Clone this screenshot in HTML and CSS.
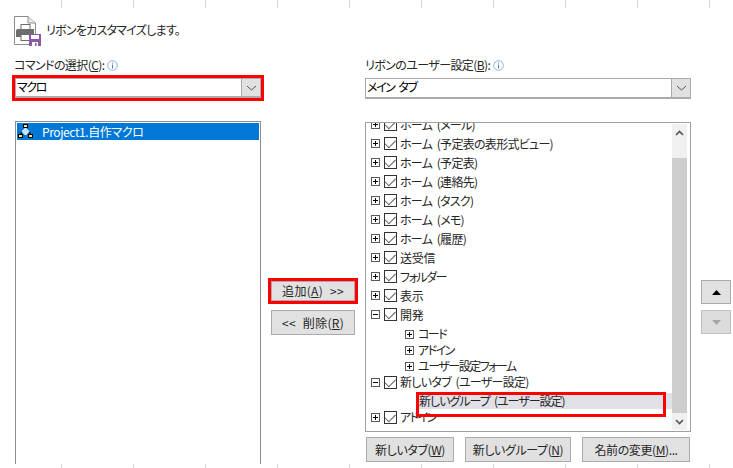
FILE: index.html
```html
<!DOCTYPE html>
<html lang="ja">
<head>
<meta charset="utf-8">
<title>リボンのカスタマイズ</title>
<link rel="stylesheet" href="styles.css">
</head>
<body>
<div class="page">
  <div class="ruler ruler-top"></div>
  <header class="head">
    <svg class="head-icon" width="28" height="32" viewBox="0 0 28 32">
      <path d="M0.5 1.5H14L21.5 8V29.5H0.5Z" fill="#fff" stroke="#8c8c8c"/>
      <path d="M14 1.5V8H21.5" fill="#e8e8e8" stroke="#8c8c8c"/>
      <rect x="7" y="9.5" width="9" height="5" fill="#fff" stroke="#6d6d6d"/>
      <path d="M2 15.5Q2 14 4 14H20V22H2Z" fill="#6d6d6d"/>
      <rect x="7" y="19.5" width="9" height="6" fill="#fff" stroke="#6d6d6d"/>
      <rect x="15" y="19" width="12" height="12" fill="#8a5aa8"/>
      <rect x="17" y="20" width="8" height="4" fill="#fff"/>
      <rect x="18" y="27" width="6" height="4" fill="#fff"/>
      <rect x="21" y="28" width="1.5" height="3" fill="#8a5aa8"/>
    </svg>
    <span class="head-text">リボンをカスタマイズします。</span>
  </header>
  <main class="main">
    <section class="col col-left">
      <div class="label">コマンドの選択(<u>C</u>):<svg class="info" width="11" height="11" viewBox="0 0 11 11"><circle cx="5.5" cy="5.5" r="4.8" fill="#fff" stroke="#8fb0d8"/><rect x="5" y="2.5" width="1" height="1" fill="#4a7fc0"/><rect x="5" y="4.5" width="1" height="4" fill="#4a7fc0"/></svg></div>
      <div class="combo combo-marked">
        <span class="combo-text">マクロ</span>
        <span class="combo-btn"><svg width="11" height="6" viewBox="0 0 11 6"><path d="M1 1L5.5 5L10 1" fill="none" stroke="#555"/></svg></span>
      </div>
      <div class="listbox">
        <div class="macro-row">
          <svg class="macro-icon" width="16" height="15" viewBox="0 0 16 15">
            <path d="M7.5 3V8M3 11V8H12V11" fill="none" stroke="#000"/>
            <rect x="5.5" y="0.5" width="4" height="3" fill="#ffe680" stroke="#000"/>
            <path d="M7.5 4L11 7.5L7.5 11L4 7.5Z" fill="#bfe6ff" stroke="#fff"/>
            <rect x="0.5" y="10.5" width="4" height="3" fill="#ffe680" stroke="#000"/>
            <rect x="10.5" y="10.5" width="4" height="3" fill="#ffe680" stroke="#000"/>
          </svg>
          <span>Project1.自作マクロ</span>
        </div>
      </div>
    </section>

    <section class="col col-mid">
      <button class="btn btn-add">追加(<u>A</u>) &gt;&gt;</button>
      <button class="btn btn-del">&lt;&lt; 削除(<u>R</u>)</button>
    </section>

    <section class="col col-right">
      <div class="label">リボンのユーザー設定(<u>B</u>):<svg class="info" width="11" height="11" viewBox="0 0 11 11"><circle cx="5.5" cy="5.5" r="4.8" fill="#fff" stroke="#8fb0d8"/><rect x="5" y="2.5" width="1" height="1" fill="#4a7fc0"/><rect x="5" y="4.5" width="1" height="4" fill="#4a7fc0"/></svg></div>
      <div class="combo">
        <span class="combo-text">メイン タブ</span>
        <span class="combo-btn"><svg width="11" height="6" viewBox="0 0 11 6"><path d="M1 1L5.5 5L10 1" fill="none" stroke="#555"/></svg></span>
      </div>
      <div class="treebox">
        <div class="tree">
          <div class="row"><i class="exp plus"></i><i class="chk"></i><span>ホーム (メール)</span></div>
          <div class="row"><i class="exp plus"></i><i class="chk"></i><span>ホーム (予定表の表形式ビュー)</span></div>
          <div class="row"><i class="exp plus"></i><i class="chk"></i><span>ホーム (予定表)</span></div>
          <div class="row"><i class="exp plus"></i><i class="chk"></i><span>ホーム (連絡先)</span></div>
          <div class="row"><i class="exp plus"></i><i class="chk"></i><span>ホーム (タスク)</span></div>
          <div class="row"><i class="exp plus"></i><i class="chk"></i><span>ホーム (メモ)</span></div>
          <div class="row"><i class="exp plus"></i><i class="chk"></i><span>ホーム (履歴)</span></div>
          <div class="row"><i class="exp plus"></i><i class="chk"></i><span class="kanji">送受信</span></div>
          <div class="row"><i class="exp plus"></i><i class="chk"></i><span class="kana">フォルダー</span></div>
          <div class="row"><i class="exp plus"></i><i class="chk"></i><span class="kanji">表示</span></div>
          <div class="row"><i class="exp minus"></i><i class="chk"></i><span class="kanji">開発</span></div>
          <div class="row sub sub-first"><i class="exp plus"></i><span class="kana">コード</span></div>
          <div class="row sub"><i class="exp plus"></i><span class="kana">アドイン</span></div>
          <div class="row sub"><i class="exp plus"></i><span class="kana">ユーザー設定フォーム</span></div>
          <div class="row tight"><i class="exp minus"></i><i class="chk"></i><span>新しいタブ (ユーザー設定)</span></div>
          <div class="row group"><span>新しいグループ (ユーザー設定)</span></div>
          <div class="row tight"><i class="exp plus"></i><i class="chk"></i><span class="kana">アドイン</span></div>
        </div>
        <div class="scrollbar">
          <span class="sb-arrow"><svg width="9" height="6" viewBox="0 0 9 6"><path d="M1 5L4.5 1.5L8 5" fill="none" stroke="#555" stroke-width="1.6"/></svg></span>
          <span class="sb-track"><span class="sb-thumb"></span></span>
          <span class="sb-arrow"><svg width="9" height="6" viewBox="0 0 9 6"><path d="M1 1L4.5 4.5L8 1" fill="none" stroke="#555" stroke-width="1.6"/></svg></span>
        </div>
        <div class="group-mark"></div>
      </div>
      <div class="actions">
        <button class="btn btn-tab">新しいタブ(<u>W</u>)</button>
        <button class="btn btn-group">新しいグループ(<u>N</u>)</button>
        <button class="btn btn-name">名前の変更(<u>M</u>)...</button>
      </div>
    </section>

    <section class="col col-arrows">
      <button class="btn btn-arrow"><svg width="9" height="5" viewBox="0 0 9 5"><path d="M4.5 0L9 5H0Z" fill="#000"/></svg></button>
      <button class="btn btn-arrow is-off"><svg width="9" height="5" viewBox="0 0 9 5"><path d="M0 0H9L4.5 5Z" fill="#a6a6a6"/></svg></button>
    </section>
  </main>
  <div class="ruler ruler-bottom"></div>
</div>
</body>
</html>
```
FILE: styles.css
```css
* { box-sizing: border-box; }
html, body { margin: 0; padding: 0; background: #fff; }
body {
  font-family: "Noto Sans CJK JP", "Noto Sans", sans-serif;
  font-size: 12px;
  line-height: 16px;
  letter-spacing: -0.7px;
  word-spacing: 2.5px;
  color: #262626;
  font-feature-settings: "palt";
}
.page {
  width: 733px;
  height: 468px;
  overflow: hidden;
  display: flex;
  flex-direction: column;
}
.ruler {
  flex: none;
  background-image: repeating-linear-gradient(90deg, transparent 0 61px, #d4d4d4 61px 62px, transparent 62px 72px);
}
.ruler-top { height: 8px; }
.ruler-bottom { height: 4px; }
.head {
  flex: none;
  height: 38px;
  padding: 7px 0 0 14px;
  display: flex;
  align-items: flex-start;
}
.head-icon { flex: none; }
.head-text { margin: 7px 0 0 4px; letter-spacing: -0.75px; }
.main {
  flex: 1;
  min-height: 0;
  display: grid;
  grid-template-columns: 247px 104px 328px 1fr;
  padding: 11px 0 0 14px;
}
.col { display: flex; flex-direction: column; min-height: 0; }
.label {
  height: 16px;
  display: flex;
  align-items: center;
  margin-bottom: 5px;
  letter-spacing: -0.6px;
}
.info { margin-left: 3px; }
u { text-underline-offset: 1px; }
.combo {
  flex: none;
  height: 21px;
  width: 326px;
  display: flex;
  border: 1px solid #ababab;
  border-bottom-width: 2px;
  background: #fff;
}
.col-left .combo { width: 246px; margin-left: 1px; outline: 3px solid #f00; outline-offset: 0; height: 20px; }
.combo-text { flex: 1; padding-left: 1px; line-height: 15px; color: #000; letter-spacing: -1.4px; }
.combo-btn {
  width: 19px;
  background: #e1e1e1;
  border-left: 1px solid #ababab;
  display: flex;
  align-items: center;
  justify-content: center;
}
.listbox {
  flex: 1;
  margin: 23px 0 0 1px;
  width: 246px;
  border: 1px solid #8d8d96;
  border-bottom: 0;
  padding: 1px;
}
.macro-row {
  height: 17px;
  background: #0078d7;
  color: #fff;
  display: flex;
  align-items: center;
  padding-left: 1px;
  letter-spacing: -0.4px;
}
.macro-icon { margin-right: 8px; }
.col-mid { padding: 224px 0 0 10px; }
.btn {
  font: inherit;
  letter-spacing: -0.4px;
  word-spacing: 3px;
  font-feature-settings: inherit;
  color: #262626;
  background: #e1e1e1;
  border: 1px solid #ababab;
  padding: 0;
  height: 25px;
  display: flex;
  align-items: center;
  justify-content: center;
  flex: none;
}
.btn-add { width: 84px; height: 20px; outline: 3px solid #f00; margin-bottom: 9px; letter-spacing: 0.3px; word-spacing: 4px; }
.btn-del { width: 84px; letter-spacing: 0.3px; word-spacing: 4px; }
.treebox {
  position: relative;
  margin-top: 23px;
  width: 326px;
  height: 310px;
  border: 1px solid #a0a0a0;
  padding: 1px;
  display: flex;
  overflow: hidden;
}
.tree { flex: 1; min-width: 0; height: 315px; margin-top: -9px; }
.row {
  height: 19px;
  display: flex;
  align-items: center;
  padding-left: 4px;
  white-space: nowrap;
}
.row.sub { height: 16px; padding-left: 38px; }
.row.sub-first { margin-top: 2px; }
.row.tight { height: 16px; }
.row.group {
  height: 16px;
  margin-top: 3px;
  margin-left: 51px;
  background: #e0e0e6;
  padding-left: 1px;
  letter-spacing: -1px;
}
.kana { letter-spacing: -1.5px; }
.kanji { letter-spacing: -0.3px; }
.exp {
  flex: none;
  width: 9px;
  height: 9px;
  margin-right: 4px;
  border: 1px solid #5a5a5a;
  background:
    linear-gradient(#000, #000) center / 5px 1px no-repeat;
}
.exp.plus {
  background:
    linear-gradient(#000, #000) center / 5px 1px no-repeat,
    linear-gradient(#000, #000) center / 1px 5px no-repeat;
}
.chk {
  flex: none;
  width: 13px;
  height: 13px;
  margin-right: 3px;
  border: 1px solid #333;
  background: #fff;
  position: relative;
}
.chk::after {
  content: "";
  position: absolute;
  left: 1px;
  top: 1px;
  width: 9px;
  height: 5px;
  border-left: 1px solid #555;
  border-bottom: 1px solid #555;
  transform: rotate(-45deg) translate(-1px, 0);
}
.scrollbar {
  flex: none;
  width: 15px;
  margin-right: 2px;
  background: #f0f0f0;
  display: flex;
  flex-direction: column;
}
.sb-arrow { flex: none; height: 17px; display: flex; align-items: center; justify-content: center; }
.sb-track { flex: 1; padding-top: 17px; display: flex; }
.sb-thumb { flex: 1; background: #cdcdcd; }
.group-mark {
  position: absolute;
  left: 50px;
  top: 269px;
  width: 250px;
  height: 25px;
  border: 3px solid #f00;
}
.actions { display: flex; gap: 11px; margin-top: 5px; margin-left: 1px; }
.btn-tab { width: 88px; }
.btn-group { width: 106px; }
.btn-name { width: 108px; }
.col-arrows { padding: 223px 0 0 8px; }
.btn-arrow { width: 30px; height: 24px; margin-bottom: 6px; }
.btn-arrow.is-off { background: #dcdcdc; border-color: #bfbfbf; }
```
